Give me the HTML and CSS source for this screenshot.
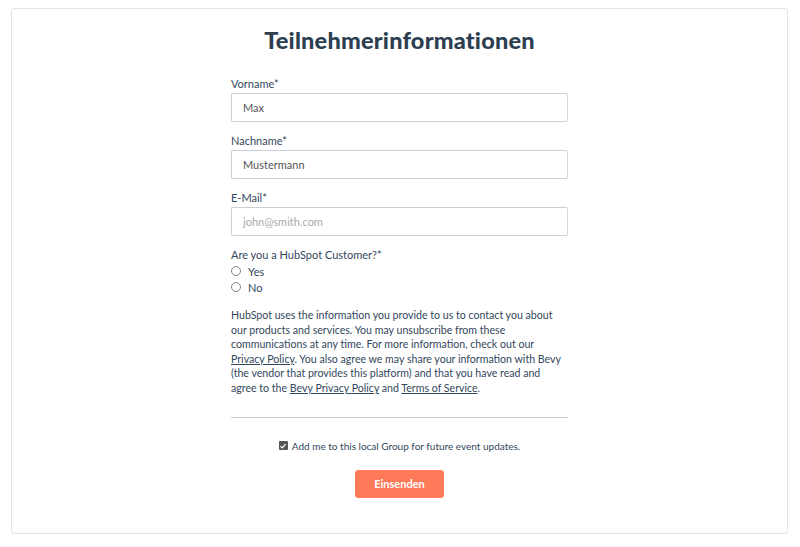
FILE: index.html
```html
<!DOCTYPE html>
<html lang="de">
<head>
<meta charset="utf-8">
<title>Teilnehmerinformationen</title>
<link rel="stylesheet" href="styles.css">
</head>
<body>
<div class="card">
  <h1 class="title">Teilnehmerinformationen</h1>
  <form class="form">
    <div class="field">
      <label class="label">Vorname*</label>
      <div class="input">Max</div>
    </div>
    <div class="field">
      <label class="label">Nachname*</label>
      <div class="input">Mustermann</div>
    </div>
    <div class="field">
      <label class="label">E-Mail*</label>
      <div class="input placeholder">john@smith.com</div>
    </div>
    <div class="question">
      <div class="label">Are you a HubSpot Customer?*</div>
      <div class="radio-row"><span class="radio"></span>Yes</div>
      <div class="radio-row"><span class="radio"></span>No</div>
    </div>
    <p class="legal">HubSpot uses the information you provide to us to contact you about our products and services. You may unsubscribe from these communications at any time. For more information, check out our <a href="#">Privacy Policy</a>. You also agree we may share your information with Bevy (the vendor that provides this platform) and that you have read and agree to the <a href="#">Bevy Privacy Policy</a> and <a href="#">Terms of Service</a>.</p>
    <div class="divider"></div>
    <div class="check-row">
      <span class="checkbox"><svg viewBox="0 0 10 10" width="8" height="8"><path d="M1.8 5.2 L4 7.3 L8.3 2.6" fill="none" stroke="#fff" stroke-width="1.6"/></svg></span>
      Add me to this local Group for future event updates.
    </div>
    <div class="actions"><button type="button" class="submit">Einsenden</button></div>
  </form>
</div>
</body>
</html>
```

FILE: styles.css
```css
* { box-sizing: border-box; }
html, body { margin: 0; padding: 0; background: #fff; }
body {
  padding: 8px 12px 13px 11px;
  font-family: Lato, "Open Sans", sans-serif;
  color: #33475b;
}
.card {
  border: 1px solid #dfe3eb;
  border-radius: 3px;
  height: 526px;
  padding-top: 14px;
  display: flex;
  flex-direction: column;
  align-items: center;
}
.title {
  margin: 0;
  font-size: 23.5px;
  line-height: 34px;
  font-weight: 900;
  color: #2d3e50;
  letter-spacing: 0.2px;
}
.form {
  width: 337px;
  margin-top: 20px;
  display: flex;
  flex-direction: column;
}
.field { margin-bottom: 12px; }
.label {
  display: block;
  font-size: 11px;
  line-height: 14px;
  color: #33475b;
  margin-bottom: 2px;
}
.input {
  height: 29px;
  border: 1px solid #cbd0d6;
  border-right-color: #d9d9d9;
  border-radius: 2px;
  padding: 0 11px;
  display: flex;
  align-items: center;
  font-size: 11px;
  color: #555;
}
.input.placeholder { color: #aaa; }
.question { margin-top: 0; }
.question .label { margin-bottom: 1px; }
.radio-row {
  display: flex;
  align-items: center;
  height: 16px;
  font-size: 11px;
  color: #33475b;
}
.radio {
  width: 10px;
  height: 10px;
  border: 1px solid #888;
  border-radius: 50%;
  margin-right: 7px;
}
.legal {
  margin: 13px 0 0;
  font-size: 10.6px;
  line-height: 14.6px;
  color: #33475b;
}
.legal a { color: #33475b; text-decoration: underline; }
.divider {
  margin-top: 21px;
  height: 1px;
  background: #c8ccd2;
}
.check-row {
  margin-top: 22px;
  display: flex;
  align-items: center;
  justify-content: center;
  font-size: 10px;
  color: #33475b;
  padding-right: 0;
}
.checkbox {
  width: 9px;
  height: 9px;
  background: #555;
  border-radius: 1px;
  display: inline-flex;
  align-items: center;
  justify-content: center;
  margin-right: 4px;
}
.actions {
  margin-top: 18px;
  display: flex;
  justify-content: center;
}
.submit {
  width: 89px;
  height: 28px;
  background: #ff7a59;
  border: 1px solid #ff7a59;
  border-radius: 3px;
  color: #fff;
  font-family: Lato, sans-serif;
  font-weight: 700;
  font-size: 11px;
  padding: 0;
}
```
